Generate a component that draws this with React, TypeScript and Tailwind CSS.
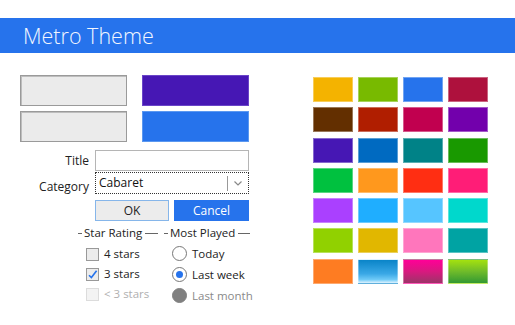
import React from "react";

const swatches: string[] = [
  "bg-[#f4b300]", "bg-[#78ba00]", "bg-[#2673ec]", "bg-[#ae113d]",
  "bg-[#632f00]", "bg-[#b01e00]", "bg-[#c1004f]", "bg-[#7200ac]",
  "bg-[#4617b4]", "bg-[#006ac1]", "bg-[#008287]", "bg-[#199900]",
  "bg-[#00c13f]", "bg-[#ff981d]", "bg-[#ff2e12]", "bg-[#ff1d77]",
  "bg-[#aa40ff]", "bg-[#1faeff]", "bg-[#56c5ff]", "bg-[#00d8cc]",
  "bg-[#91d100]", "bg-[#e1b700]", "bg-[#ff76bc]", "bg-[#00a3a3]",
  "bg-[#fe7c22]",
  "bg-[linear-gradient(to_bottom,#0a84c8,#3aa8e6_60%,#6fcaf7_85%,#dff3ff)]",
  "bg-[linear-gradient(to_bottom,#ff0097,#d8197f_50%,#9c3468)]",
  "bg-[linear-gradient(to_bottom,#a4e10f,#6fbb2a_50%,#339933)]",
];

function GroupHeader({ label }: { label: string }) {
  return (
    <div className="flex items-center h-[14px]">
      <div className="w-[4px] h-px bg-[#666]" />
      <span className="ml-[2px] mr-[3px] leading-none text-[#222] whitespace-nowrap">{label}</span>
      <div className="flex-1 h-px bg-[#666]" />
    </div>
  );
}

function Check({ label, checked, disabled }: { label: string; checked?: boolean; disabled?: boolean }) {
  return (
    <div className="flex items-center h-[20px] pl-[8px]">
      <div
        className={`relative shrink-0 w-[13px] h-[13px] border ${
          disabled ? "border-[#dcdcdc] bg-[#f3f3f3]" : "border-[#999] bg-[#ececec]"
        }`}
      >
        {checked && (
          <svg viewBox="0 0 13 13" className="absolute -left-px -top-px w-[13px] h-[13px]">
            <path d="M3 7.2 L5.4 9.6 L10.6 2.8" fill="none" stroke="#2673ec" strokeWidth="1.6" />
          </svg>
        )}
      </div>
      <span className={`ml-[5px] whitespace-nowrap ${disabled ? "text-[#b0b0b0]" : "text-[#222]"}`}>{label}</span>
    </div>
  );
}

function Radio({ label, checked, disabled }: { label: string; checked?: boolean; disabled?: boolean }) {
  return (
    <div className="flex items-center h-[21px] pl-[8px]">
      <div
        className={`shrink-0 flex items-center justify-center w-[15px] h-[15px] rounded-full border ${
          disabled ? "border-[#808080] bg-[#808080]" : "border-[#777] bg-white"
        }`}
      >
        {checked && <div className="w-[7px] h-[7px] rounded-full bg-[#2673ec]" />}
      </div>
      <span className={`ml-[5px] whitespace-nowrap ${disabled ? "text-[#8a8a8a]" : "text-[#222]"}`}>{label}</span>
    </div>
  );
}

export default function App() {
  return (
    <div className="w-[515px] h-[325px] bg-white overflow-hidden text-[12px] font-['Segoe_UI','Open_Sans',sans-serif]">
      {/* Header */}
      <div className="mt-[18px] h-[35px] bg-[#2673ec] pl-[23px] flex items-center">
        <span className="text-[21.5px] font-light text-[#f2f6ff] leading-none">Metro Theme</span>
      </div>

      <div className="flex pl-[20px]">
        {/* Left column */}
        <div className="w-[230px] shrink-0 pt-[22px]">
          <div className="grid grid-cols-[107px_107px] gap-x-[15px] gap-y-[5px]">
            <div className="h-[31px] bg-[#ebebeb] border border-[#9a9a9a] shadow-[inset_1px_1px_0_#bdbdbd]" />
            <div className="h-[31px] bg-[#4617b4] border border-[#6a45c8]" />
            <div className="h-[31px] bg-[#ebebeb] border border-[#9a9a9a] shadow-[inset_1px_1px_0_#bdbdbd]" />
            <div className="h-[31px] bg-[#2673ec] border border-[#5b98f0]" />
          </div>

          <div className="mt-[8px] flex items-center">
            <div className="w-[69px] text-right text-[#222]">Title</div>
            <div className="ml-[6px] w-[154px] h-[21px] border border-[#b5b5b5] bg-white" />
          </div>
          <div className="mt-px flex items-center">
            <div className="w-[69px] text-right text-[#222] translate-y-[4px]">Category</div>
            <div className="ml-[6px] w-[154px] h-[22px] border border-dotted border-[#333] bg-white flex items-center">
              <span className="ml-[3px] flex-1 text-[#111]">Cabaret</span>
              <div className="w-px h-[15px] bg-[#999]" />
              <svg viewBox="0 0 8 5" className="w-[8px] h-[5px] mx-[6px]">
                <path d="M0.5 0.5 L4 4 L7.5 0.5" fill="none" stroke="#888" strokeWidth="1.2" />
              </svg>
            </div>
          </div>
          <div className="mt-[6px] ml-[75px] flex gap-[5px]">
            <div className="w-[74px] h-[21px] bg-[#ececec] border border-[#86b6ea] flex items-center justify-center text-[#222]">
              OK
            </div>
            <div className="w-[75px] h-[21px] bg-[#2673ec] flex items-center justify-center text-white">
              Cancel
            </div>
          </div>

          <div className="mt-[5px] ml-[58px] flex gap-[6px] text-[11.5px]">
            <div className="w-[80px]">
              <GroupHeader label="Star Rating" />
              <div className="mt-[4px]">
                <Check label="4 stars" />
                <Check label="3 stars" checked />
                <Check label="< 3 stars" disabled />
              </div>
            </div>
            <div className="w-[86px]">
              <GroupHeader label="Most Played" />
              <div className="mt-[3px]">
                <Radio label="Today" />
                <Radio label="Last week" checked />
                <Radio label="Last month" disabled />
              </div>
            </div>
          </div>
        </div>

        {/* Swatches */}
        <div className="ml-[63px] pt-[24px]">
          <div className="grid grid-cols-[40px_40px_40px_40px] gap-x-[5px] gap-y-[5.3px]">
            {swatches.map((c, i) => (
              <div key={i} className={`h-[25px] ${c} border border-white/35`} />
            ))}
          </div>
        </div>
      </div>
    </div>
  );
}
